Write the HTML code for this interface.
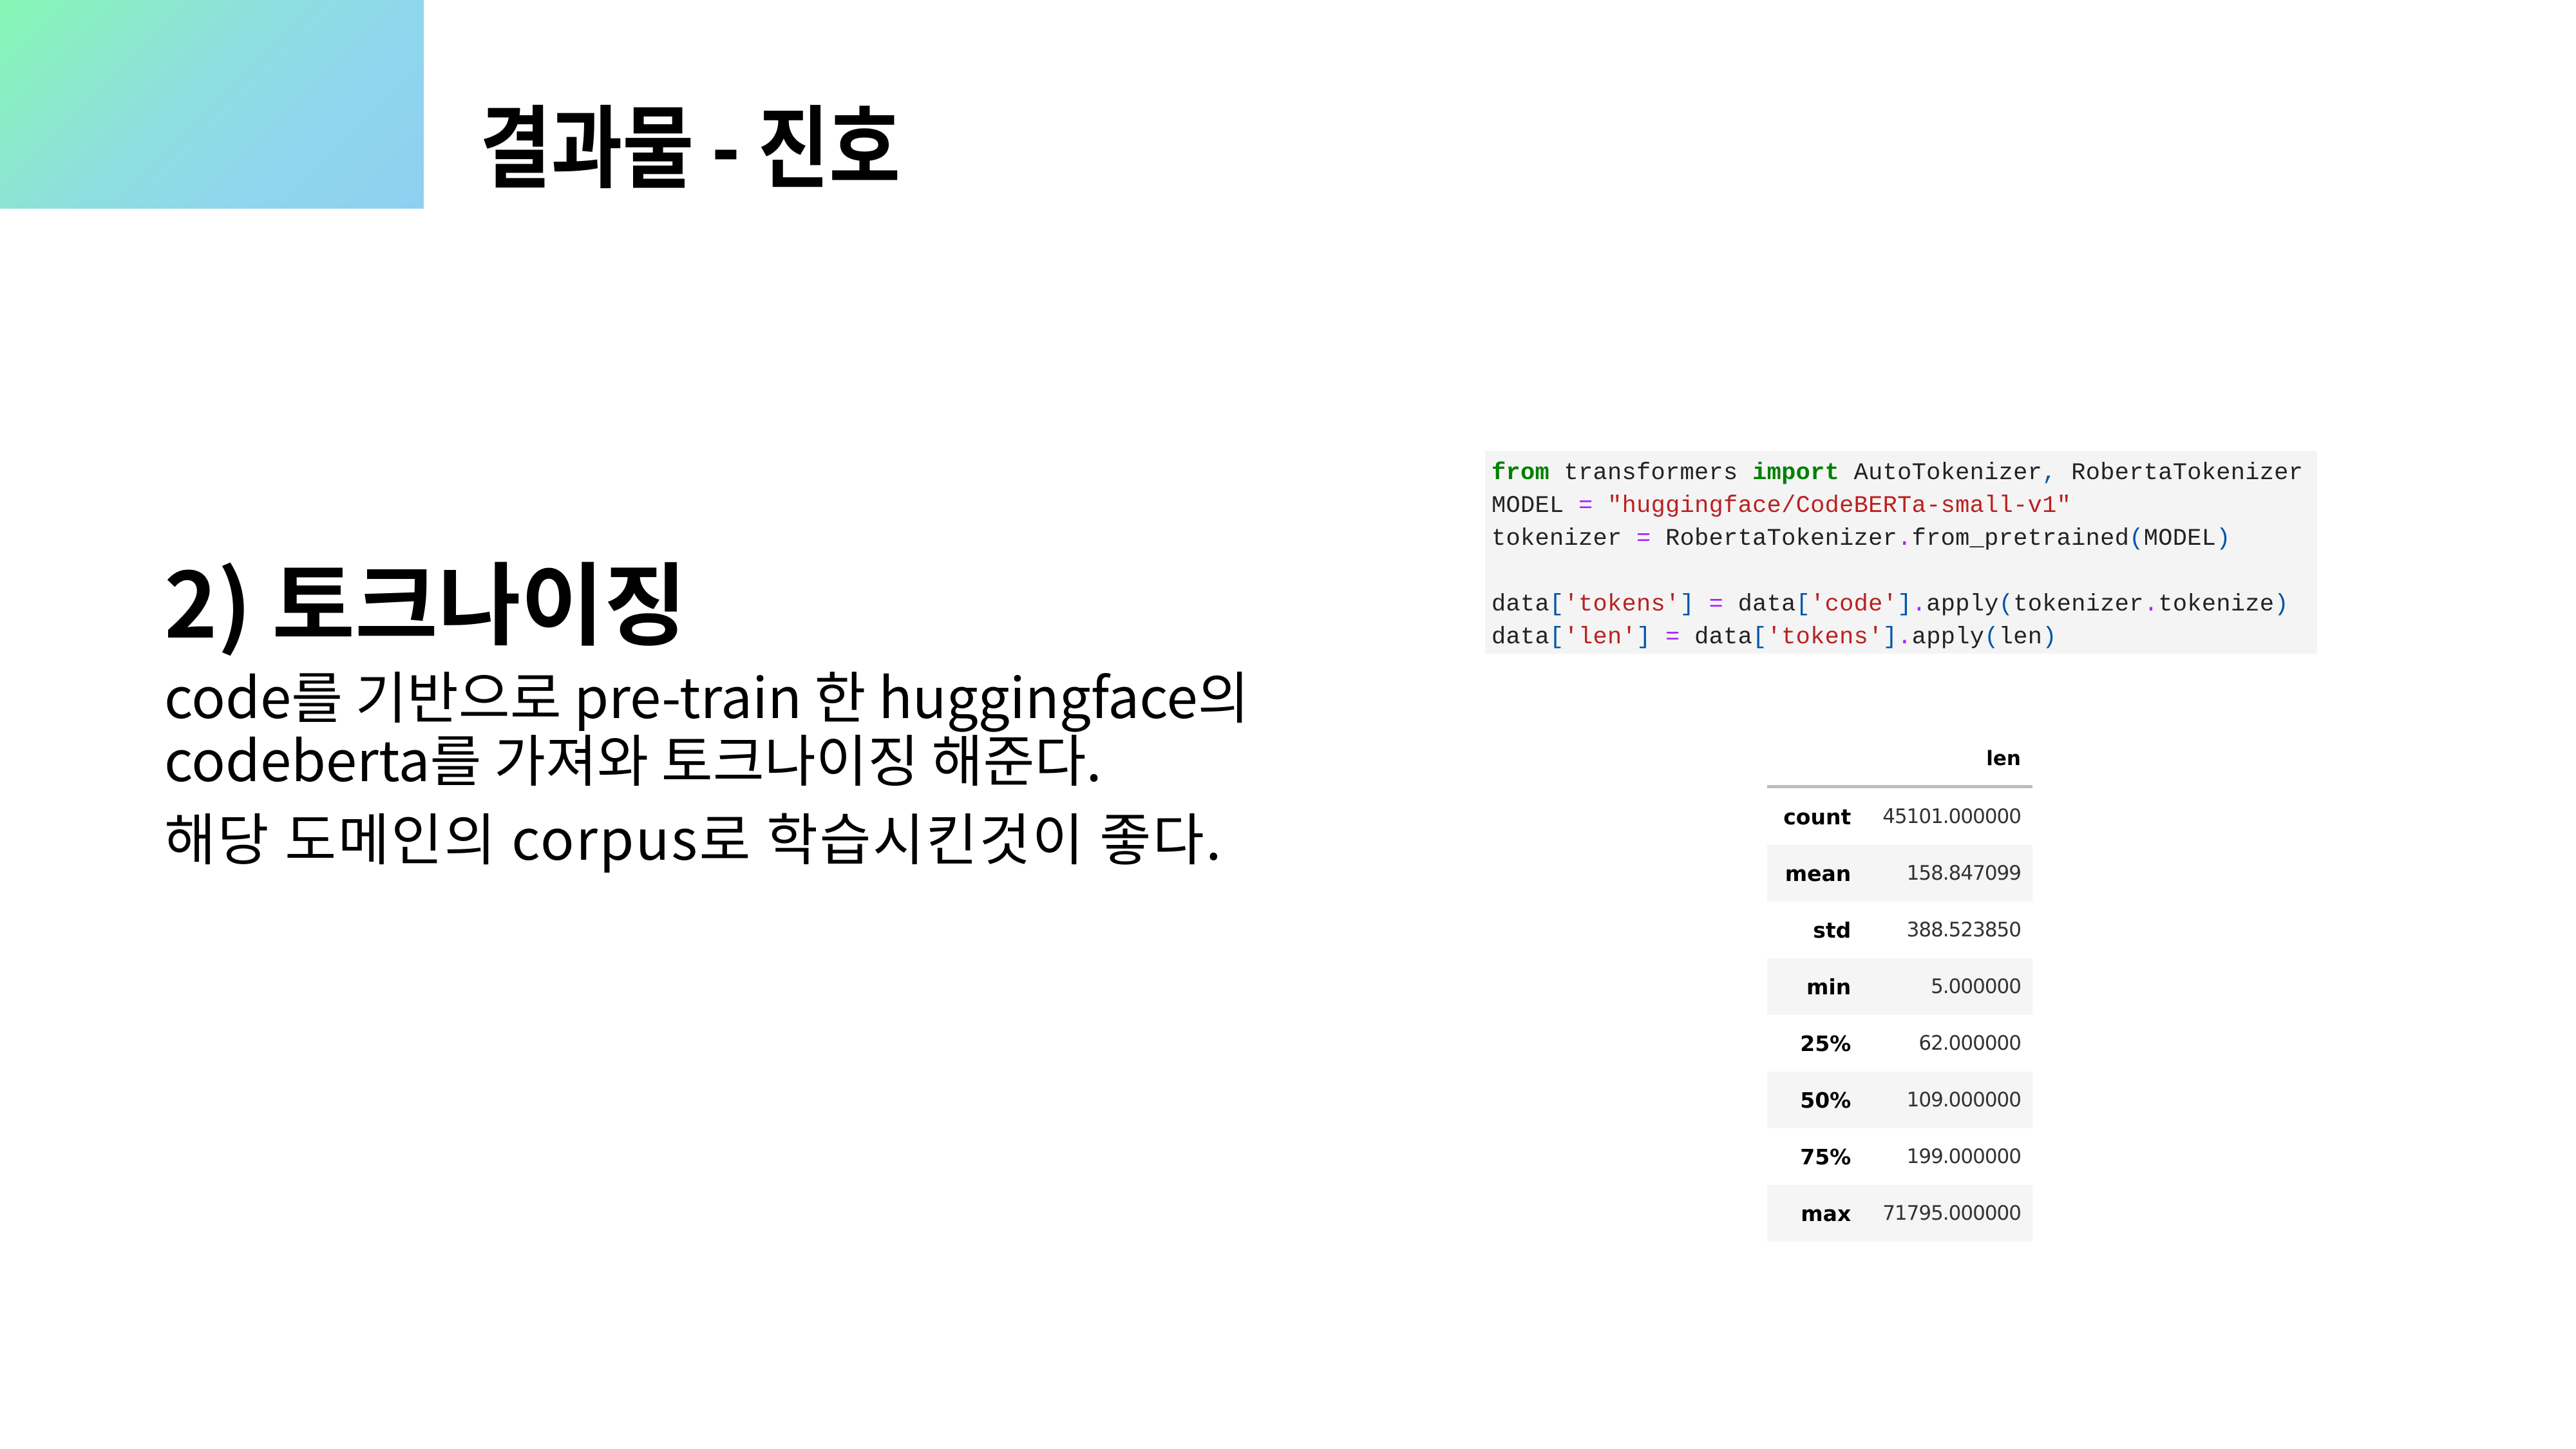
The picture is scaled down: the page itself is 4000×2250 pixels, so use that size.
<!DOCTYPE html>
<html><head><meta charset="utf-8"><style>
html,body{margin:0;padding:0;background:#fff;}
body{width:4000px;height:2250px;position:relative;overflow:hidden;font-family:"Liberation Sans","Noto Sans CJK KR",sans-serif;}
.grad{position:absolute;left:0;top:0;width:658px;height:324px;background:linear-gradient(135deg,#86f7b3 0%,#8ee0dc 40%,#8fd6ee 70%,#8fd0f0 100%);}
.title{position:absolute;left:745px;top:150px;font-size:140px;font-weight:bold;line-height:1;color:#000;font-family:"Noto Sans CJK KR","Liberation Sans",sans-serif;transform:scaleX(0.86);transform-origin:top left;}
.h2{position:absolute;left:255px;top:860px;font-size:140px;font-weight:bold;line-height:1;font-family:"Noto Sans CJK KR",sans-serif;}
.body{position:absolute;left:255px;font-size:87px;line-height:1;color:#000;font-family:"Noto Sans CJK KR",sans-serif;white-space:nowrap;}
.code{position:absolute;left:2306px;top:700px;width:1292px;height:315px;background:#f4f4f4;}
.code pre{margin:0;position:absolute;left:10px;top:10px;font-family:"Liberation Mono",monospace;font-size:37px;line-height:51px;color:#222;letter-spacing:0.3px;}
.k{color:#008000;font-weight:bold}.s{color:#ba2121}.o{color:#aa22ff}.p{color:#0055aa}
table{position:absolute;left:2744px;top:1137px;border-collapse:collapse;font-family:"DejaVu Sans",sans-serif;font-size:31px;width:412px;}
th,td{text-align:right;padding:0 18px;height:88px;}
thead th{height:82px;border-bottom:5px solid #bdbdbd;vertical-align:middle;}
tbody th{font-weight:bold;font-size:33px;}
tbody tr:nth-child(even){background:#f5f5f5;}
td{color:#333;letter-spacing:-1px}
</style></head><body>
<div class="grad"></div>
<div class="title">결과물 - 진호</div>
<div class="h2">2) 토크나이징</div>
<div class="body" style="top:1035px">code를 기반으로 pre-train 한 huggingface의</div>
<div class="body" style="top:1133px">codeberta를 가져와 토크나이징 해준다.</div>
<div class="body" style="top:1255px;letter-spacing:2.5px">해당 도메인의 corpus로 학습시킨것이 좋다.</div>
<div class="code"><pre><span class="k">from</span> transformers <span class="k">import</span> AutoTokenizer<span class="p">,</span> RobertaTokenizer
MODEL <span class="o">=</span> <span class="s">"huggingface/CodeBERTa-small-v1"</span>
tokenizer <span class="o">=</span> RobertaTokenizer<span class="o">.</span>from_pretrained<span class="p">(</span>MODEL<span class="p">)</span>

data<span class="p">[</span><span class="s">'tokens'</span><span class="p">]</span> <span class="o">=</span> data<span class="p">[</span><span class="s">'code'</span><span class="p">]</span><span class="o">.</span>apply<span class="p">(</span>tokenizer<span class="o">.</span>tokenize<span class="p">)</span>
data<span class="p">[</span><span class="s">'len'</span><span class="p">]</span> <span class="o">=</span> data<span class="p">[</span><span class="s">'tokens'</span><span class="p">]</span><span class="o">.</span>apply<span class="p">(</span>len<span class="p">)</span></pre></div>
<table>
<thead><tr><th></th><th>len</th></tr></thead>
<tbody>
<tr><th>count</th><td>45101.000000</td></tr>
<tr><th>mean</th><td>158.847099</td></tr>
<tr><th>std</th><td>388.523850</td></tr>
<tr><th>min</th><td>5.000000</td></tr>
<tr><th>25%</th><td>62.000000</td></tr>
<tr><th>50%</th><td>109.000000</td></tr>
<tr><th>75%</th><td>199.000000</td></tr>
<tr><th>max</th><td>71795.000000</td></tr>
</tbody></table>
</body></html>
